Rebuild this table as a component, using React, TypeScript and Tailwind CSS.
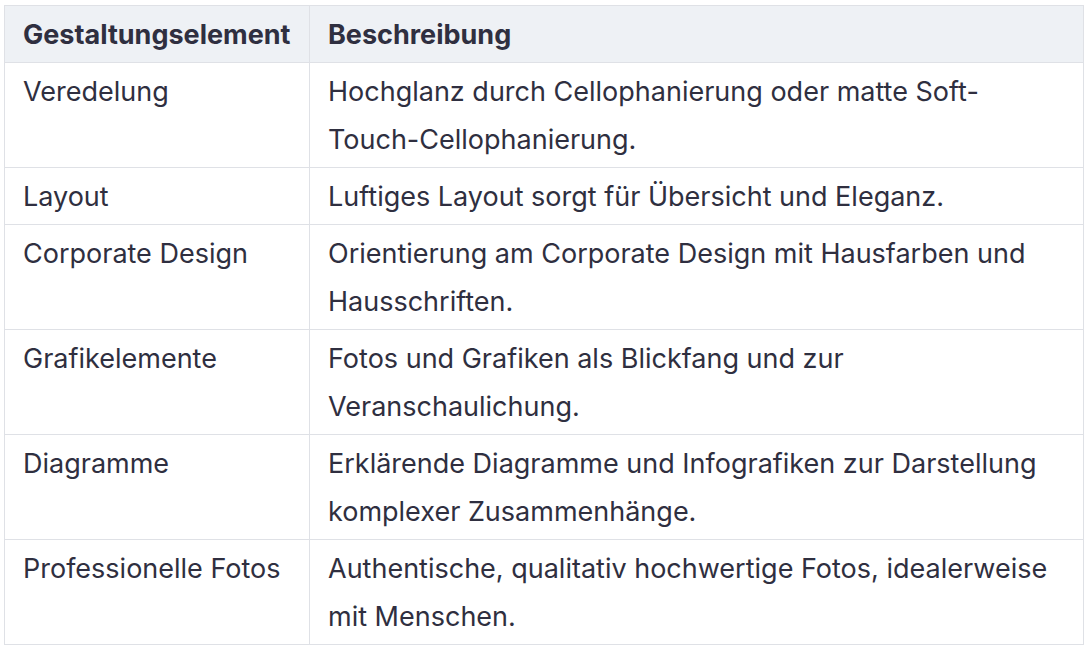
const rows: [string, string][] = [
  ["Veredelung", "Hochglanz durch Cellophanierung oder matte Soft-Touch-Cellophanierung."],
  ["Layout", "Luftiges Layout sorgt für Übersicht und Eleganz."],
  ["Corporate Design", "Orientierung am Corporate Design mit Hausfarben und Hausschriften."],
  ["Grafikelemente", "Fotos und Grafiken als Blickfang und zur Veranschaulichung."],
  ["Diagramme", "Erklärende Diagramme und Infografiken zur Darstellung komplexer Zusammenhänge."],
  ["Professionelle Fotos", "Authentische, qualitativ hochwertige Fotos, idealerweise mit Menschen."],
];

export default function App() {
  return (
    <div className="w-[1090px] h-[652px] bg-white pt-[5px] pl-[4px] font-['Inter',sans-serif] text-[#2f2f40]">
      <table className="w-[1080px] table-fixed border-collapse text-[27px] leading-[48px]">
        <colgroup>
          <col className="w-[305px]" />
          <col />
        </colgroup>
        <thead>
          <tr className="bg-[#eef1f5]">
            <th className="border border-[#dfe1e6] pl-[18px] pr-[18px] pt-[5px] pb-[3px] text-left font-bold">Gestaltungselement</th>
            <th className="border border-[#dfe1e6] pl-[18px] pr-[18px] pt-[5px] pb-[3px] text-left font-bold">Beschreibung</th>
          </tr>
        </thead>
        <tbody>
          {rows.map(([a, b]) => (
            <tr key={a}>
              <td className="border border-[#dfe1e6] pl-[18px] pr-[18px] pt-[5px] pb-[3px] align-top">{a}</td>
              <td className="border border-[#dfe1e6] pl-[18px] pr-[18px] pt-[5px] pb-[3px] align-top">{b}</td>
            </tr>
          ))}
        </tbody>
      </table>
    </div>
  );
}
